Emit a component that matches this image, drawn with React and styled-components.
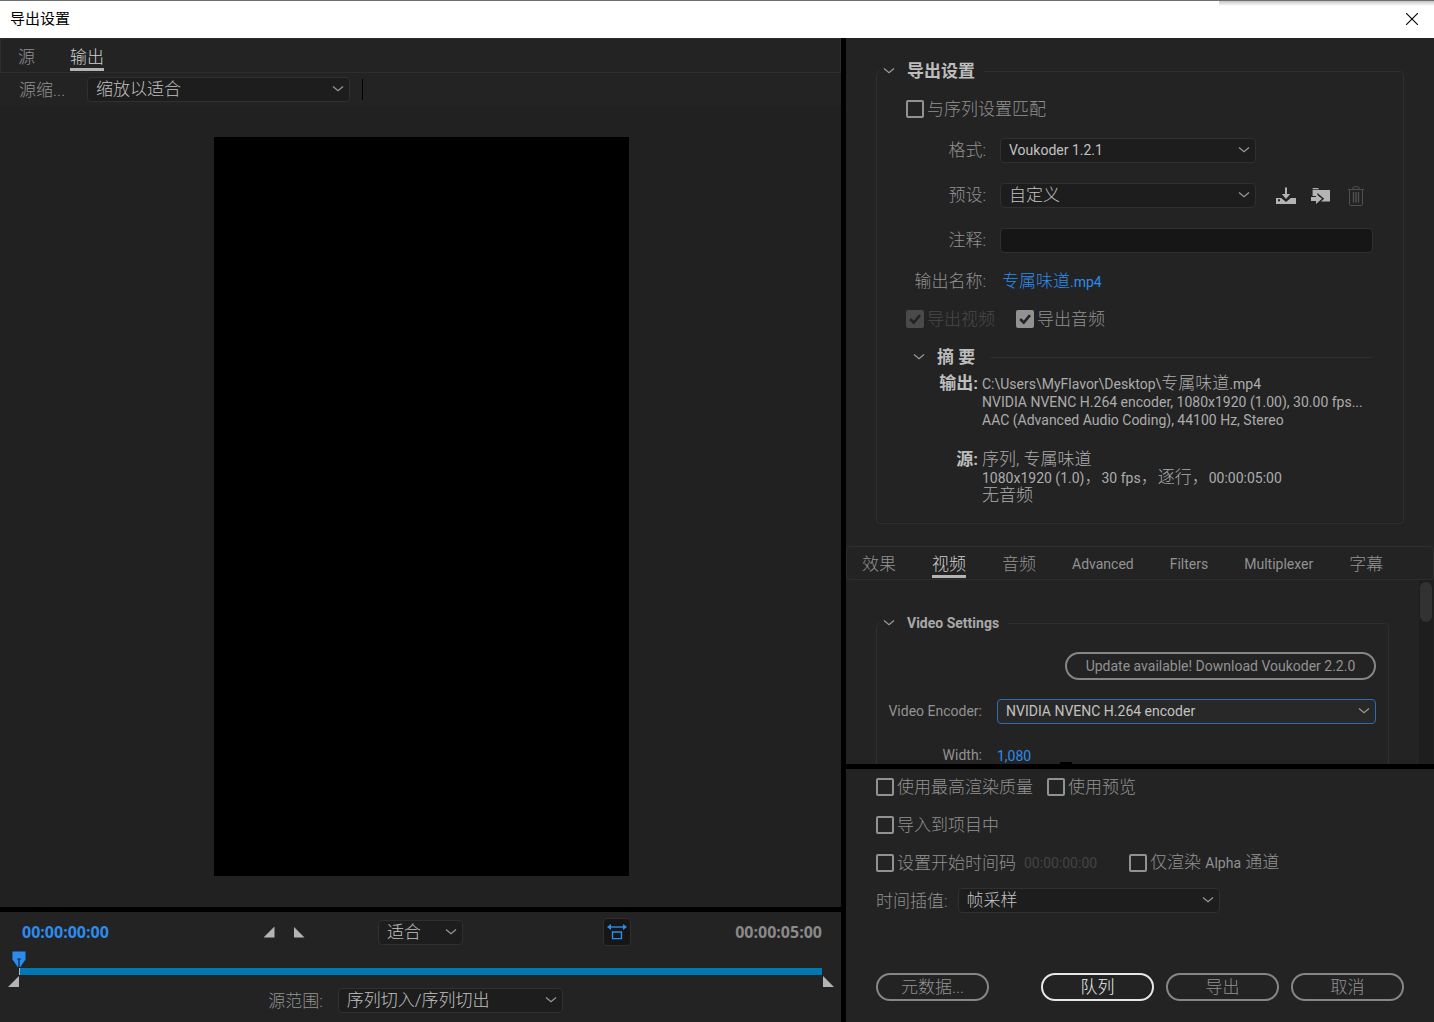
import React, { useState } from 'react'
import styled, { createGlobalStyle, css } from 'styled-components'

const GlobalStyle = createGlobalStyle`
  :root {
    --clr-panel: #232323;
    --clr-well: #1d1d1d;
    --clr-line: #2e2e2e;
    --clr-label: #929292;
    --clr-stroke: #8a8a8a;
    --clr-text: #c2c2c2;
    --clr-blue: #2d8ceb;
    --fs-latin: 14px;
    --fs-cjk: 17px;
    --radius: 4px;
  }
  *,
  *::before,
  *::after {
    box-sizing: border-box;
  }
  body {
    margin: 0;
    background: #000;
    color: var(--clr-label);
    font-family: Roboto, 'Noto Sans CJK SC', sans-serif;
    font-size: var(--fs-cjk);
    font-weight: 300;
    line-height: 24px;
  }
  button,
  input,
  select {
    font: inherit;
    color: inherit;
  }
  a {
    color: var(--clr-blue);
    text-decoration: none;
  }
`

const tabs = [
  { id: 'effects', label: '效果' },
  { id: 'video', label: '视频' },
  { id: 'audio', label: '音频' },
  { id: 'advanced', label: 'Advanced', latin: true },
  { id: 'filters', label: 'Filters', latin: true },
  { id: 'multiplexer', label: 'Multiplexer', latin: true },
  { id: 'captions', label: '字幕' },
]

const Chevron = () => (
  <svg width='12' height='8' viewBox='0 0 12 8' fill='none' aria-hidden='true'>
    <path d='M1 1.5 L6 5.7 L11 1.5' stroke='#9a9a9a' strokeWidth='1.2' />
  </svg>
)

const Dropdown = ({ id, label, options, width, latin, active }) => (
  <SelectBox $width={width} $latin={latin} $active={active}>
    <select id={id} aria-label={label}>
      {options.map((option) => (
        <option key={option}>{option}</option>
      ))}
    </select>
    <Chevron />
  </SelectBox>
)

const Check = ({ id, label, defaultChecked, disabled, children }) => (
  <CheckLabel htmlFor={id} $disabled={disabled}>
    <span className='box'>
      <input
        type='checkbox'
        id={id}
        defaultChecked={defaultChecked}
        disabled={disabled}
      />
      <svg width='18' height='18' viewBox='0 0 18 18' fill='none'>
        <path d='M4.2 9 L7.8 12.6 L14 5.2' stroke='#232323' strokeWidth='2.6' />
      </svg>
    </span>
    <span>{children || label}</span>
  </CheckLabel>
)

const SectionTitle = ({ latin, children }) => (
  <TitleButton type='button' $latin={latin}>
    <Chevron />
    <span>{children}</span>
  </TitleButton>
)

const SaveIcon = () => (
  <svg width='20' height='18' viewBox='0 0 20 18' aria-hidden='true'>
    <path
      fill='#b4b4b4'
      d='M0 11 H5.2 L10 15 L14.8 11 H20 V17 H0 Z M2 12.3 V14.3 H4 V12.3 Z'
      fillRule='evenodd'
    />
    <path fill='#b4b4b4' d='M9 0.5 H11 V7 H14.2 L10 12 L5.8 7 H9 Z' />
  </svg>
)

const ImportIcon = () => (
  <svg width='20' height='18' viewBox='0 0 20 18' aria-hidden='true'>
    <path fill='#b4b4b4' d='M1.6 1 H7.2 L8 2.2 H1.6 Z' />
    <path
      fill='#b4b4b4'
      d='M1.6 3 H19 V14.6 H10 L13.2 11.8 L6.4 6 V9 H1.6 Z'
    />
    <path fill='#b4b4b4' d='M0 10 H5 V7 L11 11.8 L5 17 V14 H0 Z' />
  </svg>
)

const TrashIcon = () => (
  <svg
    width='16'
    height='20'
    viewBox='0 0 16 20'
    fill='none'
    stroke='#505050'
    aria-hidden='true'
  >
    <path d='M0 3.5 H16 M5 3 V1.5 Q5 0.8 6 0.8 H10 Q11 0.8 11 1.5 V3' />
    <path d='M1.5 4 V18.5 Q1.5 19.5 2.5 19.5 H13.5 Q14.5 19.5 14.5 18.5 V4' />
    <path d='M5.5 6 V16.5 M8 6 V16.5 M10.5 6 V16.5' strokeWidth='1.4' />
  </svg>
)

const PreviewPane = () => (
  <Pane>
    <SourceTabs>
      <Tab type='button'>源</Tab>
      <Tab type='button' $active>
        输出
      </Tab>
    </SourceTabs>
    <ScaleBar>
      <label htmlFor='scale'>源缩...</label>
      <Dropdown id='scale' options={['缩放以适合']} width='263px' />
      <span className='rule' />
    </ScaleBar>
    <Stage>
      <div className='frame' />
    </Stage>
    <Transport>
      <div className='controls'>
        <div className='side'>
          <Timecode $current>00:00:00:00</Timecode>
          <div className='marks'>
            <IconButton type='button' aria-label='设置入点'>
              <Marker />
            </IconButton>
            <IconButton type='button' aria-label='设置出点'>
              <Marker $out />
            </IconButton>
          </div>
        </div>
        <Dropdown label='缩放级别' options={['适合']} width='85px' />
        <div className='side end'>
          <AspectButton type='button' aria-label='长宽比校正'>
            <svg width='20' height='16' viewBox='0 0 20 16' fill='none'>
              <path d='M3 3 H17' stroke='#2d8ceb' strokeWidth='1.4' />
              <path
                fill='#2d8ceb'
                d='M0 3 L4 0 V6 Z M20 3 L16 0 V6 Z'
              />
              <path
                d='M5.5 8 H14.5 V14.6 H5.5 Z'
                stroke='#2d8ceb'
                strokeWidth='1.4'
              />
            </svg>
          </AspectButton>
          <Timecode>00:00:05:00</Timecode>
        </div>
      </div>
      <Timeline>
        <svg className='playhead' width='16' height='26' viewBox='0 0 16 26'>
          <path
            d='M1 1 H15 V9.5 L9.5 17.5 H6.5 L1 9.5 Z'
            fill='#2d8ceb'
            stroke='#10283f'
          />
          <path d='M6 9 H10 M8 9 V18' stroke='#10283f' strokeWidth='1.2' />
          <path d='M8.5 18 V25' stroke='#b4b4b4' />
        </svg>
        <input type='range' aria-label='时间轴' min='0' max='150' defaultValue='0' />
        <div className='handles'>
          <Marker />
          <Marker $out />
        </div>
      </Timeline>
      <div className='range'>
        <label htmlFor='source-range'>源范围:</label>
        <Dropdown
          id='source-range'
          options={['序列切入/序列切出']}
          width='225px'
        />
      </div>
    </Transport>
  </Pane>
)

const ExportSettings = () => (
  <ExportSection>
    <Group>
      <legend>
        <SectionTitle>导出设置</SectionTitle>
      </legend>
      <div className='match'>
        <Check id='match' label='与序列设置匹配' />
      </div>
      <Fields>
        <label htmlFor='format'>格式:</label>
        <Dropdown id='format' options={['Voukoder 1.2.1']} width='256px' latin />
        <label htmlFor='preset'>预设:</label>
        <div className='preset'>
          <Dropdown id='preset' options={['自定义']} width='256px' />
          <div className='icons'>
            <IconButton type='button' aria-label='保存预设'>
              <SaveIcon />
            </IconButton>
            <IconButton type='button' aria-label='导入预设'>
              <ImportIcon />
            </IconButton>
            <IconButton type='button' aria-label='删除预设' disabled>
              <TrashIcon />
            </IconButton>
          </div>
        </div>
        <label htmlFor='comment'>注释:</label>
        <input type='text' id='comment' />
      </Fields>
      <OutputName>
        <span>输出名称:</span>
        <a href='#output'>
          专属味道<Latin>.mp4</Latin>
        </a>
      </OutputName>
      <div className='media'>
        <Check id='export-video' label='导出视频' defaultChecked disabled />
        <Check id='export-audio' label='导出音频' defaultChecked />
      </div>
      <SummaryHead>
        <SectionTitle>摘 要</SectionTitle>
        <hr />
      </SummaryHead>
      <Summary>
        <dt>输出:</dt>
        <dd>
          <p>
            <Latin>C:\Users\MyFlavor\Desktop\</Latin>专属味道
            <Latin>.mp4</Latin>
          </p>
          <p>
            <Latin>
              NVIDIA NVENC H.264 encoder, 1080x1920 (1.00), 30.00 fps...
            </Latin>
          </p>
          <p>
            <Latin>AAC (Advanced Audio Coding), 44100 Hz, Stereo</Latin>
          </p>
        </dd>
        <dt>源:</dt>
        <dd>
          <p>序列, 专属味道</p>
          <p>
            <Latin>1080x1920 (1.0)</Latin>，<Latin>30 fps</Latin>，逐行，
            <Latin>00:00:05:00</Latin>
          </p>
          <p>无音频</p>
        </dd>
      </Summary>
    </Group>
  </ExportSection>
)

const VideoSettings = () => (
  <ScrollArea>
    <Group>
      <legend>
        <SectionTitle latin>Video Settings</SectionTitle>
      </legend>
      <div className='update'>
        <PillButton type='button' $latin>
          Update available! Download Voukoder 2.2.0
        </PillButton>
      </div>
      <Fields $video>
        <label htmlFor='encoder'>Video Encoder:</label>
        <Dropdown
          id='encoder'
          options={['NVIDIA NVENC H.264 encoder']}
          width='100%'
          latin
          active
        />
        <label htmlFor='width'>Width:</label>
        <input type='text' id='width' className='number' defaultValue='1,080' />
      </Fields>
    </Group>
    <div className='scrollbar'>
      <span />
    </div>
  </ScrollArea>
)

const RenderOptions = () => (
  <Footer>
    <div className='row'>
      <Check id='max-quality' label='使用最高渲染质量' />
      <Check id='use-preview' label='使用预览' />
    </div>
    <div className='row'>
      <Check id='import-project' label='导入到项目中' />
    </div>
    <div className='row'>
      <div className='start'>
        <Check id='start-timecode' label='设置开始时间码' />
        <Latin $muted>00:00:00:00</Latin>
      </div>
      <Check id='alpha-only'>
        仅渲染 <Latin>Alpha</Latin> 通道
      </Check>
    </div>
    <div className='row interpolation'>
      <label htmlFor='interpolation'>时间插值:</label>
      <Dropdown id='interpolation' options={['帧采样']} width='262px' />
    </div>
    <div className='actions'>
      <PillButton type='button'>元数据...</PillButton>
      <PillButton type='button' $primary>
        队列
      </PillButton>
      <PillButton type='button'>导出</PillButton>
      <PillButton type='button'>取消</PillButton>
    </div>
  </Footer>
)

const App = () => {
  const [activeTab, setActiveTab] = useState('video')

  return (
    <>
      <GlobalStyle />
      <Dialog>
        <TitleBar>
          <h1>导出设置</h1>
          <button type='button' aria-label='关闭'>
            <svg width='12' height='12' viewBox='0 0 12 12'>
              <path d='M0 0 L12 12 M12 0 L0 12' stroke='#000' strokeWidth='1.1' />
            </svg>
          </button>
        </TitleBar>
        <main>
          <PreviewPane />
          <Pane>
            <ExportSettings />
            <SettingsTabs>
              {tabs.map(({ id, label, latin }) => (
                <Tab
                  key={id}
                  type='button'
                  $latin={latin}
                  $active={id === activeTab}
                  onClick={() => setActiveTab(id)}
                >
                  {label}
                </Tab>
              ))}
            </SettingsTabs>
            <VideoSettings />
            <RenderOptions />
          </Pane>
        </main>
      </Dialog>
    </>
  )
}

const Dialog = styled.div`
  min-height: 100vh;
  display: flex;
  flex-direction: column;
  main {
    flex: 1;
    display: grid;
    grid-template-columns: minmax(0, 1fr) 588px;
    column-gap: 5px;
  }
`

const TitleBar = styled.header`
  position: relative;
  height: 38px;
  display: flex;
  align-items: center;
  justify-content: space-between;
  padding: 0 10px 2px;
  background: #fff;
  color: #000;
  border-top: 1px solid #6f6f6f;
  &::after {
    content: '';
    position: absolute;
    top: 0;
    right: 0;
    width: 15%;
    height: 5px;
    background: linear-gradient(#c4c4c4, #fff);
  }
  h1 {
    margin: 0;
    font-size: 15px;
    font-weight: 400;
  }
  button {
    display: grid;
    place-items: center;
    width: 24px;
    height: 24px;
    padding: 0;
    border: none;
    background: none;
  }
`

const Pane = styled.section`
  display: flex;
  flex-direction: column;
  min-width: 0;
  background: var(--clr-panel);
`

const Latin = styled.span`
  font-size: var(--fs-latin);
  font-weight: 400;
  ${({ $muted }) =>
    $muted &&
    css`
      color: #444;
    `}
`

const Tab = styled.button`
  align-self: stretch;
  padding: 3px 0 0;
  border: none;
  background: none;
  white-space: nowrap;
  color: ${({ $active }) => ($active ? '#d0d0d0' : 'var(--clr-label)')};
  ${({ $latin }) =>
    $latin &&
    css`
      font-size: var(--fs-latin);
      font-weight: 400;
    `}
  ${({ $active }) =>
    $active &&
    css`
      box-shadow: inset 0 -3px #b4b4b4;
    `}
`

const SourceTabs = styled.nav`
  display: flex;
  gap: 35px;
  height: 35px;
  padding: 0 17px 1px;
  border: 1px solid var(--clr-line);
`

const SettingsTabs = styled.nav`
  display: flex;
  gap: 36px;
  height: 34px;
  padding: 0 15px 1px;
  border: 1px solid var(--clr-line);
  border-radius: var(--radius);
`

const SelectBox = styled.span`
  position: relative;
  display: block;
  width: ${({ $width }) => $width};
  height: 25px;
  select {
    appearance: none;
    display: block;
    width: 100%;
    height: 25px;
    padding: 0 24px 0 8px;
    border: 1px solid ${({ $active }) => ($active ? '#2b6cb4' : '#303030')};
    border-radius: var(--radius);
    background: ${({ $active }) => ($active ? '#282828' : 'var(--clr-well)')};
    color: var(--clr-text);
    line-height: 23px;
    outline: none;
    ${({ $latin }) =>
      $latin &&
      css`
        font-size: var(--fs-latin);
        font-weight: 400;
      `}
  }
  svg {
    position: absolute;
    top: 8px;
    right: 6px;
    pointer-events: none;
  }
`

const ScaleBar = styled.div`
  display: flex;
  align-items: center;
  height: 33px;
  padding: 0 19px;
  label {
    width: 68px;
  }
  .rule {
    width: 1px;
    height: 21px;
    margin-left: 12px;
    background: #000;
  }
`

const Stage = styled.div`
  flex: 1 1 0;
  min-height: 300px;
  display: flex;
  justify-content: center;
  padding: 31px 30px 31px 32px;
  background: #212121;
  .frame {
    aspect-ratio: 9 / 16;
    background: #000;
  }
`

const Marker = styled.span`
  display: block;
  width: 11px;
  height: 11px;
  background: #b4b4b4;
  clip-path: ${({ $out }) =>
    $out ? 'polygon(0 0, 100% 100%, 0 100%)' : 'polygon(100% 0, 100% 100%, 0 100%)'};
`

const Timecode = styled.span`
  font-family: 'Open Sans', sans-serif;
  font-size: 16px;
  font-weight: 700;
  color: ${({ $current }) => ($current ? 'var(--clr-blue)' : 'var(--clr-stroke)')};
`

const IconButton = styled.button`
  display: grid;
  place-items: center;
  width: 24px;
  height: 24px;
  padding: 0;
  border: none;
  background: none;
`

const AspectButton = styled(IconButton)`
  width: 28px;
  height: 28px;
  border: 1px solid #303030;
  border-radius: var(--radius);
  background: #161616;
`

const Transport = styled.div`
  padding: 6px 0 9px;
  border-top: 5px solid #000;
  .controls {
    display: grid;
    grid-template-columns: calc(50% - 44px) auto 1fr;
    align-items: center;
    padding: 0 19px 0 22px;
  }
  .side {
    display: flex;
    align-items: center;
    justify-content: space-between;
  }
  .marks {
    display: flex;
    gap: 6px;
    margin-right: 67px;
  }
  .end {
    padding-left: 140px;
  }
  .range {
    display: flex;
    align-items: center;
    justify-content: center;
    gap: 15px;
    padding-right: 10px;
  }
`

const Timeline = styled.div`
  position: relative;
  margin: 0 19px;
  padding-top: 22px;
  .playhead {
    position: absolute;
    top: 4px;
    left: -8px;
    z-index: 1;
    pointer-events: none;
  }
  input {
    appearance: none;
    display: block;
    width: 100%;
    height: 7px;
    margin: 0;
    background: #0078b4;
    outline: none;
    &::-webkit-slider-thumb {
      appearance: none;
      width: 1px;
      height: 7px;
    }
  }
  .handles {
    display: flex;
    justify-content: space-between;
    margin: 0 -12px 0 -11px;
    padding: 1px 0;
  }
`

const ExportSection = styled.div`
  padding: 21px 30px 22px;
`

const Group = styled.fieldset`
  min-width: 0;
  margin: 0;
  padding: 0;
  border: 1px solid var(--clr-line);
  border-radius: var(--radius);
  legend {
    margin-left: 3px;
    padding: 0 9px 0 3px;
  }
  .match {
    margin: 14px 0 17px 29px;
  }
  .media {
    display: flex;
    gap: 21px;
    height: 25px;
    margin: 13px 0 13px 29px;
  }
  .update {
    display: flex;
    justify-content: flex-end;
    margin: 17px 12px 19px 0;
  }
`

const TitleButton = styled.button`
  display: flex;
  align-items: center;
  gap: 12px;
  height: 24px;
  padding: 0;
  border: none;
  background: none;
  color: #bdbdbd;
  font-weight: 700;
  ${({ $latin }) =>
    $latin &&
    css`
      font-size: var(--fs-latin);
      color: #a8a8a8;
    `}
`

const CheckLabel = styled.label`
  display: flex;
  align-items: center;
  gap: 3px;
  height: 24px;
  white-space: nowrap;
  color: ${({ $disabled }) => ($disabled ? '#4a4a4a' : 'var(--clr-label)')};
  .box {
    position: relative;
    width: 18px;
    height: 18px;
  }
  input {
    appearance: none;
    display: block;
    width: 18px;
    height: 18px;
    margin: 0;
    border: 2px solid currentColor;
    border-radius: 2px;
    &:checked {
      background: currentColor;
    }
    &:checked + svg {
      display: block;
    }
  }
  svg {
    display: none;
    position: absolute;
    inset: 0;
    pointer-events: none;
  }
`

const Fields = styled.div`
  display: grid;
  grid-template-columns: ${({ $video }) => ($video ? '105px' : '109px')} 1fr;
  align-items: center;
  gap: ${({ $video }) => ($video ? '19px 15px' : '20px 14px')};
  padding-right: ${({ $video }) => ($video ? '12px' : '30px')};
  label {
    height: 25px;
    line-height: 25px;
    text-align: right;
    ${({ $video }) =>
      $video &&
      css`
        font-size: var(--fs-latin);
        font-weight: 400;
      `}
  }
  input {
    width: 100%;
    height: 25px;
    padding: 0 8px;
    border: 1px solid #303030;
    border-radius: var(--radius);
    background: #161616;
    outline: none;
  }
  .number {
    padding: 0;
    border: none;
    background: none;
    color: var(--clr-blue);
    font-size: var(--fs-latin);
    font-weight: 400;
  }
  .preset {
    display: flex;
    align-items: center;
    gap: 18px;
  }
  .icons {
    display: flex;
    gap: 11px;
  }
`

const OutputName = styled.div`
  display: grid;
  grid-template-columns: 109px 1fr;
  gap: 16px;
  height: 25px;
  margin-top: 16px;
  text-align: right;
  a {
    text-align: left;
  }
`

const SummaryHead = styled.div`
  display: flex;
  align-items: center;
  gap: 15px;
  padding: 0 30px 0 36px;
  hr {
    flex: 1;
    margin: 0;
    border: none;
    border-top: 1px solid var(--clr-line);
  }
`

const Summary = styled.dl`
  display: grid;
  grid-template-columns: 101px 1fr;
  gap: 22px 4px;
  margin: 5px 0 19px;
  color: #acacac;
  line-height: 18px;
  dt {
    text-align: right;
    color: #bdbdbd;
    font-weight: 700;
  }
  dd,
  p {
    margin: 0;
    white-space: nowrap;
  }
  p {
    height: 18px;
  }
`

const PillButton = styled.button`
  width: ${({ $latin }) => ($latin ? '311px' : '113px')};
  height: 28px;
  padding: 0;
  border: 2px solid ${({ $primary }) => ($primary ? '#e6e6e6' : '#868686')};
  border-radius: 14px;
  background: none;
  color: ${({ $primary }) => ($primary ? '#f0f0f0' : 'var(--clr-label)')};
  line-height: 24px;
  ${({ $latin }) =>
    $latin &&
    css`
      font-size: var(--fs-latin);
      font-weight: 400;
    `}
`

const ScrollArea = styled.div`
  position: relative;
  flex: 1 1 0;
  min-height: 120px;
  padding: 31px 45px 0 30px;
  overflow: hidden;
  ${Group} {
    padding-bottom: 40px;
  }
  .scrollbar {
    position: absolute;
    top: 0;
    right: 1px;
    bottom: 0;
    width: 14px;
    padding: 2px 1px;
    background: #1e1e1e;
    span {
      display: block;
      height: 40px;
      border-radius: 6px;
      background: #323232;
    }
  }
`

const Footer = styled.footer`
  position: relative;
  display: flex;
  flex-direction: column;
  gap: 13px;
  padding: 5px 30px 21px;
  border-top: 5px solid #000;
  &::before {
    content: '';
    position: absolute;
    top: -7px;
    left: 214px;
    width: 12px;
    height: 2px;
    background: #000;
  }
  .row {
    display: flex;
    align-items: center;
    gap: 14px;
    height: 25px;
  }
  .start {
    display: flex;
    gap: 8px;
    margin-right: 18px;
  }
  .interpolation {
    gap: 10px;
  }
  .actions {
    display: flex;
    gap: 12px;
    margin-top: 47px;
  }
  .actions button:first-child {
    margin-right: auto;
  }
`

export default App
